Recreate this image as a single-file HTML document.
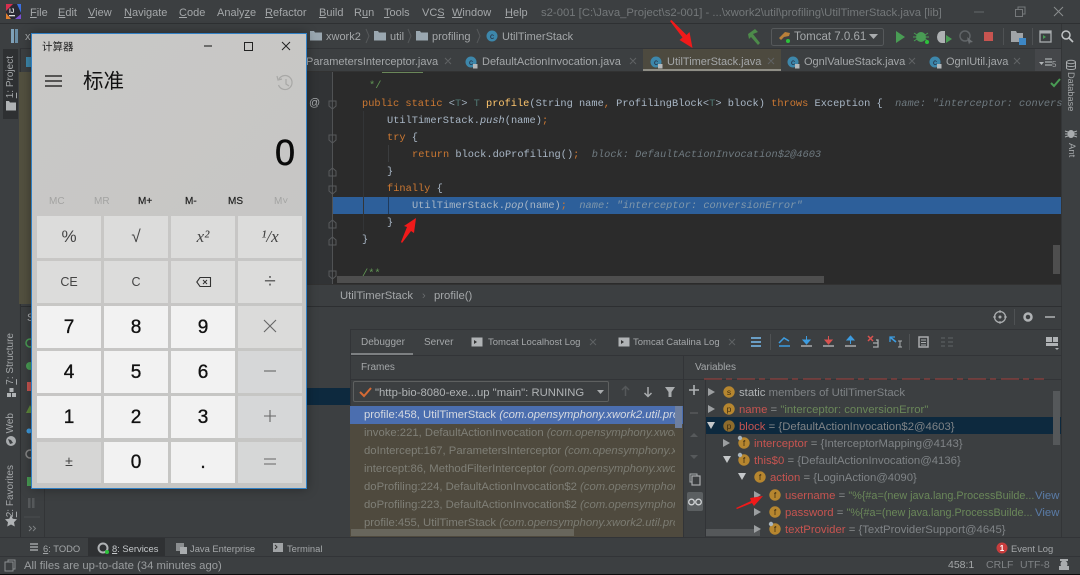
<!DOCTYPE html>
<html><head><meta charset="utf-8"><style>
html,body{margin:0;padding:0;width:1080px;height:575px;overflow:hidden;background:#3c3f41}
#r{position:absolute;left:0;top:0;width:1080px;height:575px;overflow:hidden;font-family:"Liberation Sans","Noto Sans CJK SC",sans-serif;font-size:11px;color:#a4a7a9;filter:blur(.3px)}
.b{position:absolute}
.t{position:absolute;white-space:nowrap;line-height:14px;margin-top:1px}
.c{position:absolute;white-space:pre;line-height:14px;margin-top:1px;font-family:"Liberation Mono",monospace;font-size:10.33px;color:#a9b7c6}
.k{color:#cc7832}.m{color:#ffc66d}.h{color:#6f7a80;font-style:italic}.i{font-style:italic}
.v{position:absolute;white-space:nowrap;line-height:12px;writing-mode:vertical-rl;transform:rotate(180deg);font-size:10.5px;color:#a4a7a9}
.vd{position:absolute;white-space:nowrap;line-height:12px;writing-mode:vertical-rl;font-size:10.5px;color:#a4a7a9}
.f{color:#7f7f77;font-size:11.3px}.f i{color:#7b7b72}
.vr{font-size:11.35px}
.red{color:#c75450}.eq{color:#8b8e90}.g{color:#6a8759}.bl{color:#5a7ca8}.gr{color:#7f8386}
.btn{position:absolute;width:64px;height:42px;text-align:center;line-height:42px;color:#222;font-family:"Liberation Sans","Noto Sans CJK SC",sans-serif}
.n{background:#f2f2f2;font-size:19px;line-height:44px;-webkit-text-stroke:.35px #111;color:#111}
.o{background:#dcdcdb;font-size:16px;color:#444}
.s{font-size:9.4px}
</style></head><body><div id="r">

<!-- structure -->
<div class="b" style="left:0;top:23px;width:1080px;height:1px;background:#2e3032"></div>
<div class="b" style="left:20px;top:48px;width:1042px;height:1px;background:#323437"></div>
<div class="b" style="left:3px;top:49px;width:15px;height:70px;background:#2e3032"></div>
<div class="b" style="left:20px;top:49px;width:1px;height:488px;background:#2f3133"></div>
<div class="b" style="left:19px;top:72px;width:14px;height:232px;background:#52503f"></div>
<!-- editor -->
<div class="b" style="left:307px;top:72px;width:26px;height:212px;background:#313335"></div>
<div class="b" style="left:333px;top:72px;width:729px;height:212px;background:#2b2b2b"></div>
<div class="b" style="left:332px;top:72px;width:1px;height:212px;background:#505254"></div>
<div class="b" style="left:333px;top:197px;width:728px;height:17px;background:#2d5f9a"></div>
<div class="b" style="left:363px;top:197px;width:1px;height:17px;background:#27466b"></div>
<div class="b" style="left:388px;top:197px;width:1px;height:17px;background:#1f3a5c"></div>
<div class="b" style="left:388px;top:145px;width:1px;height:17px;background:#3b3d3f"></div>
<div class="b" style="left:363px;top:111px;width:1px;height:120px;background:#333537"></div>
<div class="b" style="left:382px;top:72px;width:41px;height:1px;background:#6a8759"></div>
<div class="b" style="left:337px;top:276px;width:487px;height:7px;background:#4e4e4e"></div>
<div class="b" style="left:1053px;top:245px;width:7px;height:29px;background:#4e4e4e"></div>
<div class="b" style="left:307px;top:284px;width:755px;height:22px;background:#3c3f41;border-top:1px solid #323232;box-sizing:border-box"></div>
<!-- tabs -->
<div class="b" style="left:643px;top:49px;width:138px;height:23px;background:#4d4a3f"></div>
<div class="b" style="left:643px;top:69px;width:138px;height:3px;background:#8f8e86"></div>
<div class="b" style="left:1035px;top:49px;width:27px;height:23px;background:#45474a"></div>
<div class="b" style="left:307px;top:71px;width:755px;height:1px;background:#323232"></div>
<!-- right strip -->
<div class="b" style="left:1061px;top:24px;width:1px;height:513px;background:#333537"></div>
<!-- debug -->
<div class="b" style="left:21px;top:306px;width:1041px;height:1px;background:#2d2f31"></div>
<div class="b" style="left:350px;top:329px;width:712px;height:1px;background:#323437"></div>
<div class="b" style="left:350px;top:355px;width:712px;height:1px;background:#323437"></div>
<div class="b" style="left:350px;top:353px;width:63px;height:2px;background:#7d8082"></div>
<div class="b" style="left:350px;top:330px;width:1px;height:207px;background:#323437"></div>
<div class="b" style="left:683px;top:355px;width:1px;height:182px;background:#323437"></div>
<div class="b" style="left:350px;top:379px;width:712px;height:1px;background:#323437"></div>
<div class="b" style="left:44px;top:330px;width:1px;height:207px;background:#333537"></div>
<div class="b" style="left:307px;top:388px;width:43px;height:17px;background:#0d293e"></div>
<div class="b" style="left:353px;top:381px;width:256px;height:21px;border:1px solid #5e6060;border-radius:2px;box-sizing:border-box"></div>
<!-- frames -->
<div class="b" style="left:350px;top:406px;width:333px;height:131px;background:#4f4a3e"></div>
<div class="b" style="left:350px;top:406px;width:333px;height:18px;background:#4b6eaf"></div>
<div class="b" style="left:675px;top:406px;width:7px;height:22px;background:#6d7fa0"></div>
<div class="b" style="left:351px;top:529px;width:223px;height:7px;background:#68665c"></div>
<div class="b" style="left:687px;top:492px;width:16px;height:19px;background:#5b5f61;border-radius:2px"></div>
<!-- vars -->
<div class="b" style="left:705px;top:380px;width:1px;height:157px;background:#323437"></div>
<div class="b" style="left:706px;top:417px;width:355px;height:17px;background:#0d293e"></div>
<div class="b" style="left:1053px;top:391px;width:7px;height:54px;background:#55585a"></div>
<div class="b" style="left:706px;top:529px;width:54px;height:7px;background:#55585a"></div>
<div class="b" style="left:0;top:537px;width:1080px;height:1px;background:#323437"></div>
<div class="b" style="left:88px;top:538px;width:77px;height:18px;background:#2f3133"></div>
<div class="b" style="left:0;top:556px;width:1080px;height:1px;background:#323437"></div>
<div class="b" style="left:0;top:574px;width:1080px;height:1px;background:#0c0c0c"></div>

<!-- icons -->
<svg class="b" style="left:0;top:0" width="1080" height="575" viewBox="0 0 1080 575" font-family="Liberation Sans, sans-serif">
<defs>
<g id="ci"><circle cx="0" cy="0" r="5.5" fill="#3d87ab"/><text x="0" y="3" font-size="8" text-anchor="middle" fill="#223">c</text><rect x="2" y="2" width="4.5" height="4.5" fill="#b4b7b9"/></g>
<g id="fo"><path d="M0 0h4l1 1.5h7v8h-12z" fill="#9aa7b0"/></g>
<g id="fi"><circle cx="0" cy="0" r="5.7" fill="#b6862f"/><text x="0" y="3" font-size="8.5" text-anchor="middle" fill="#3c2c10">f</text></g>
<g id="ar"><path d="M-3-4L4 0L-3 4z" fill="#9c9fa1"/></g>
<g id="ad"><path d="M-4-3L4-3L0 4z" fill="#c5c8ca"/></g>
<g id="pin"><circle cx="-4" cy="-5" r="2.2" fill="#a8b4bc"/></g>
<g id="tm"><rect x="-5.5" y="-4.5" width="11" height="9" fill="#b0b3b5"/><path d="M-3-2L0 0L-3 2z" fill="#333"/></g>
</defs>
<!-- logo -->
<rect x="6" y="4" width="15" height="15" fill="#2a2a33"/><path d="M6 4h7l-7 7z" fill="#d6304f"/><path d="M21 4v9l-4-9z" fill="#3c6fe0"/><path d="M6 19v-6l5 6z" fill="#e2802f"/><path d="M21 19h-6l6-5z" fill="#7a4fd0"/><rect x="9" y="15" width="6" height="1.3" fill="#ddd"/><text x="9" y="13" font-size="6.5" font-weight="bold" fill="#ddd">IJ</text>
<!-- nav -->
<rect x="11" y="29" width="3" height="14" fill="#7fa1b8"/><rect x="15" y="29" width="3" height="14" fill="#6a8da5"/>
<use href="#fo" x="310" y="31"/><use href="#fo" x="374" y="31"/><use href="#fo" x="416" y="31"/>
<path d="M366 29l3 7-3 7M408 29l3 7-3 7M477 29l3 7-3 7" fill="none" stroke="#55585a"/>
<circle cx="492" cy="36" r="5.5" fill="#3d87ab"/><text x="492" y="39" font-size="8" text-anchor="middle" fill="#223">c</text>
<!-- toolbar -->
<path d="M748 34l7-5 3 3-5 2 7 9-2 2-7-8-2 2z" fill="#4d8a4a"/>
<rect x="771.5" y="28.5" width="112" height="17" rx="2" fill="none" stroke="#56595b"/>
<path d="M779 38l6-6 5 1-1 3-5 1-3 3z" fill="#b9803a"/><circle cx="788" cy="41" r="2" fill="#2cc23b"/>
<path d="M869 34h9l-4.500 5z" fill="#a9acae"/>
<path d="M896 31l9 6-9 6z" fill="#499c54"/>
<circle cx="921" cy="37" r="5" fill="#499c54"/><path d="M914 33l3 2M928 33l-3 2M914 41l3-2M928 41l-3-2M913 37h3M926 37h3" stroke="#499c54"/><circle cx="927" cy="42" r="2" fill="#2cc23b"/>
<path d="M945 31h-3a5 6 0 0 0 0 12h3z" fill="#aeb1b3"/><path d="M946 35l6 4-6 4z" fill="#499c54"/>
<circle cx="965" cy="36" r="5" fill="none" stroke="#5f6366" stroke-width="1.500"/><path d="M967 37l6 5-3 .5-1 2z" fill="#6a6e71"/>
<rect x="984" y="32" width="9" height="9" fill="#c75450"/>
<rect x="1003" y="28" width="1" height="17" fill="#4f5254"/><rect x="1032" y="28" width="1" height="17" fill="#4f5254"/>
<path d="M1011 31h5l1 2h6v9h-12z" fill="#a0a4a7"/><rect x="1019" y="38" width="7" height="7" fill="#3d87c5"/>
<rect x="1040" y="31" width="11" height="11" fill="none" stroke="#a9acae" stroke-width="1.300"/><rect x="1040" y="31" width="11" height="2.500" fill="#a9acae"/><path d="M1043 35l3 2-3 2z" fill="#499c54"/>
<circle cx="1066" cy="35" r="4" fill="none" stroke="#c0c3c5" stroke-width="1.500"/><path d="M1069 38l4 4" stroke="#c0c3c5" stroke-width="1.700"/>
<!-- window -->
<path d="M974 12h10" stroke="#65686a"/><rect x="1015.500" y="9.500" width="7" height="7" fill="none" stroke="#75787a"/><path d="M1018 9v-2h7v7h-2" fill="none" stroke="#75787a"/><path d="M1054 7l9 9M1063 7l-9 9" stroke="#8a8d8f"/>
<!-- tabs -->
<use href="#ci" x="471" y="62"/><use href="#ci" x="656" y="62"/><use href="#ci" x="793" y="62"/><use href="#ci" x="935" y="62"/>
<path d="M445 58l6 6M451 58l-6 6M630 58l6 6M636 58l-6 6M768 58l6 6M774 58l-6 6M909 58l6 6M915 58l-6 6M1014 58l6 6M1020 58l-6 6" stroke="#606365"/>
<path d="M1039 62h5l-2.500 3z" fill="#b0b3b5"/><path d="M1045 59h7M1045 62h7M1045 65h7" stroke="#9a9d9f" stroke-width="1.500"/>
<path d="M1051 83l3 3 6-7" fill="none" stroke="#499c54" stroke-width="2"/>
<!-- right strip icons -->
<ellipse cx="1071" cy="62" rx="4.500" ry="1.700" fill="none" stroke="#a9acae"/><path d="M1066.500 62v6c0 2 9 2 9 0v-6M1066.500 65c0 2 9 2 9 0" fill="none" stroke="#a9acae"/>
<ellipse cx="1071" cy="134" rx="3.500" ry="4" fill="#a9acae"/><path d="M1065 131l3 1M1077 131l-3 1M1065 134h3M1077 134h-3M1065 137l3-1M1077 137l-3-1" stroke="#a9acae"/>
<!-- gutter -->
<text x="309" y="106" font-size="11" fill="#a9acae">@</text>
<g fill="none" stroke="#57595b">
<path d="M329 101h7v5l-3.500 3-3.500-3zM329 135h7v5l-3.500 3-3.500-3zM329 186h7v5l-3.500 3-3.500-3zM329 271h7v5l-3.500 3-3.500-3z"/>
<path d="M329 176v-5l3.500-3 3.500 3v5zM329 228v-5l3.500-3 3.500 3v5zM329 245v-5l3.500-3 3.500 3v5z"/>
</g>
<!-- debug toolbar -->
<circle cx="1000" cy="317" r="5.500" fill="none" stroke="#a9acae" stroke-width="1.300"/><circle cx="1000" cy="317" r="1.500" fill="#a9acae"/>
<path d="M1000 310v3M1000 321v3M993 317h3M1004 317h3" stroke="#a9acae"/>
<rect x="1014" y="309" width="1" height="16" fill="#4f5254"/>
<circle cx="1028" cy="317" r="3.500" fill="none" stroke="#b0b3b5" stroke-width="2.500"/>
<path d="M1045 317h10" stroke="#b0b3b5" stroke-width="1.500"/>
<path d="M751 338h10M751 342h10M751 346h10" stroke="#6a9ec5" stroke-width="2"/>
<rect x="770" y="334" width="1" height="16" fill="#4f5254"/>
<path d="M779 346h11" stroke="#3d9ce0" stroke-width="1.500"/><path d="M779 343l5-5 5 3" fill="none" stroke="#3d9ce0" stroke-width="1.500"/>
<path d="M801 346h11" stroke="#a9acae" stroke-width="1.500"/><path d="M806.500 336v5M803 340h7l-3.500 4z" stroke="#3d9ce0" fill="#3d9ce0"/>
<path d="M823 346h11" stroke="#a9acae" stroke-width="1.500"/><path d="M828.500 336v5M825 340h7l-3.500 4z" stroke="#d9524f" fill="#d9524f"/>
<path d="M845 346h11" stroke="#a9acae" stroke-width="1.500"/><path d="M850.500 344v-5M847 340h7l-3.500-4z" stroke="#3d9ce0" fill="#3d9ce0"/>
<path d="M868 336l5 5M873 336l-5 5" stroke="#d9524f" stroke-width="1.500"/><path d="M873 343h5v4h-5M876 340h2v3" fill="none" stroke="#a9acae" stroke-width="1.300"/>
<path d="M890 337l6 5" stroke="#3d9ce0" stroke-width="1.700"/><path d="M890 342v-5h5" fill="none" stroke="#3d9ce0" stroke-width="1.300"/><path d="M898 341h4M900 341v6M898 347h4" stroke="#a9acae"/>
<rect x="909" y="334" width="1" height="16" fill="#4f5254"/>
<rect x="919" y="337" width="9" height="10" fill="none" stroke="#a9acae" stroke-width="1.500"/><path d="M921 340h5M921 342.500h5M921 345h5" stroke="#a9acae"/>
<path d="M941 338h4M941 342h4M941 346h4M948 338h5M948 342h5M948 346h5" stroke="#5a5d5f" stroke-width="1.300"/>
<rect x="1046" y="337" width="6" height="5" fill="#b0b3b5"/><rect x="1053" y="337" width="5" height="5" fill="#b0b3b5"/><rect x="1046" y="343" width="12" height="3" fill="#b0b3b5"/><path d="M1055 348h4l-2 2z" fill="#b0b3b5"/>
<!-- tomcat tab icons -->
<use href="#tm" x="477" y="342"/><use href="#tm" x="624" y="342"/>
<path d="M590 339l6 6M596 339l-6 6M729 339l6 6M735 339l-6 6" stroke="#5f6264"/>
<!-- combo -->
<path d="M360 392l4 4 7-8" fill="none" stroke="#d56a35" stroke-width="2"/>
<path d="M597 390h7l-3.500 4z" fill="#a9acae"/>
<path d="M625.500 396v-9M622 390l3.500-3.500 3.500 3.500" fill="none" stroke="#55585a" stroke-width="1.500"/>
<path d="M648 387v9M644.500 393l3.500 3.500 3.500-3.500" fill="none" stroke="#a9acae" stroke-width="1.500"/>
<path d="M665 387h10l-3.500 5v5h-3v-5z" fill="#a9acae"/>
<!-- var col icons -->
<path d="M689 390h10M694 385v10" stroke="#b0b3b5" stroke-width="1.600"/>
<path d="M690 413h8" stroke="#56595b" stroke-width="1.500"/>
<path d="M690 437l4-4 4 4z" fill="#56595b"/><path d="M690 455l4 4 4-4z" fill="#56595b"/>
<rect x="690" y="474" width="7" height="8" fill="none" stroke="#a9acae"/><rect x="692" y="476" width="8" height="9" fill="#3c3f41" stroke="#a9acae" stroke-width="1.200"/>
<circle cx="691.500" cy="502" r="2.800" fill="none" stroke="#d0d3d5" stroke-width="1.300"/><circle cx="698.500" cy="502" r="2.800" fill="none" stroke="#d0d3d5" stroke-width="1.300"/>
<!-- vars tree -->
<path d="M704 379h340" stroke="#a5413d" stroke-dasharray="18 4 6 5" stroke-width="1"/>
<use href="#ar" x="711" y="392"/><use href="#ar" x="711" y="409"/><use href="#ad" x="711" y="425"/>
<use href="#ar" x="726" y="443"/><use href="#ad" x="727" y="459"/><use href="#ad" x="742" y="476"/>
<use href="#ar" x="757" y="495"/><use href="#ar" x="757" y="512"/><use href="#ar" x="757" y="529"/>
<circle cx="729" cy="392" r="5.700" fill="#b6862f"/><text x="729" y="395" font-size="8.500" text-anchor="middle" fill="#3c2c10">s</text>
<circle cx="729" cy="409" r="5.700" fill="#b6862f"/><text x="729" y="412" font-size="8.500" text-anchor="middle" fill="#3c2c10">p</text>
<circle cx="729" cy="426" r="5.700" fill="#8d6b2c"/><text x="729" y="429" font-size="8.500" text-anchor="middle" fill="#3c2c10">p</text>
<use href="#fi" x="744" y="443"/><use href="#pin" x="744" y="443"/>
<use href="#fi" x="744" y="460"/><use href="#pin" x="744" y="460"/>
<use href="#fi" x="760" y="477"/>
<use href="#fi" x="775" y="495"/><use href="#fi" x="775" y="512"/><use href="#fi" x="775" y="529"/><use href="#pin" x="775" y="529"/>
<!-- left strip icons -->
<path d="M6 101h3l1 1.500h6v8h-10z" fill="#b0b3b5"/>
<rect x="7" y="393" width="4" height="4" fill="#b0b3b5"/><rect x="12" y="393" width="4" height="4" fill="#b0b3b5"/><rect x="9.500" y="388" width="4" height="4" fill="#b0b3b5"/>
<circle cx="11" cy="441" r="5" fill="#a9acae"/><path d="M8 439l3 1 2 3-3 1z" fill="#3c3f41"/>
<path d="M11 515l1.800 3.800 4.200.5-3 3 .8 4.200-3.800-2-3.800 2 .8-4.200-3-3 4.200-.5z" fill="#b0b3b5"/>
<!-- narrow col -->
<rect x="26" y="57" width="6" height="10" fill="#3d87ab"/>
<circle cx="30" cy="343" r="4" fill="none" stroke="#499c54" stroke-width="1.500"/>
<circle cx="30" cy="366" r="4" fill="#499c54"/>
<rect x="27" y="382" width="5" height="9" fill="#c75450"/>
<path d="M30 405l-4 8h8z" fill="#5f8a3b"/>
<circle cx="29" cy="431" r="2.500" fill="#3d9ce0"/>
<circle cx="30" cy="454" r="4" fill="none" stroke="#888" stroke-width="1.500"/>
<rect x="27" y="477" width="4" height="9" fill="#499c54"/>
<rect x="28" y="498" width="2.500" height="10" fill="#55585a"/><rect x="32" y="498" width="2.500" height="10" fill="#55585a"/>
<path d="M24 517h16" stroke="#4a4d4f"/>
<path d="M29 526l2.500 2.500-2.500 2.500M33 526l2.500 2.500-2.500 2.500" fill="none" stroke="#7d8082"/>
<!-- bottom icons -->
<path d="M30 544h8M30 547h8M30 550h8" stroke="#a0a3a5" stroke-width="1.500"/>
<circle cx="103" cy="548" r="4.500" fill="none" stroke="#b0b3b5" stroke-width="2"/><circle cx="107" cy="552" r="2" fill="#2cc23b"/>
<rect x="176" y="543" width="8" height="8" fill="#8b8e90"/><rect x="180" y="547" width="7" height="7" fill="#a9acae"/>
<rect x="273" y="543" width="10" height="9" fill="#a0a3a5"/><path d="M275 545l2 2-2 2" fill="none" stroke="#333"/>
<rect x="8" y="560" width="7" height="9" fill="none" stroke="#8a8d8f"/><rect x="5" y="562" width="8" height="9" fill="#3c3f41" stroke="#8a8d8f"/>
<circle cx="1002" cy="548" r="5.500" fill="#c73d3d"/><text x="1002" y="551" font-size="8" font-weight="bold" text-anchor="middle" fill="#fff">1</text>
<circle cx="1064" cy="564" r="3.500" fill="#a9acae"/><rect x="1059" y="566" width="10" height="4" fill="#a9acae"/><rect x="1060" y="559" width="8" height="2" fill="#a9acae"/>
</svg>

<!-- menu -->
<span class="t" style="left:30px;top:5px"><u>F</u>ile</span><span class="t" style="left:58px;top:5px"><u>E</u>dit</span><span class="t" style="left:88px;top:5px"><u>V</u>iew</span><span class="t" style="left:124px;top:5px"><u>N</u>avigate</span><span class="t" style="left:179px;top:5px"><u>C</u>ode</span><span class="t" style="left:217px;top:5px">Analy<u>z</u>e</span><span class="t" style="left:265px;top:5px"><u>R</u>efactor</span><span class="t" style="left:319px;top:5px"><u>B</u>uild</span><span class="t" style="left:354px;top:5px">R<u>u</u>n</span><span class="t" style="left:384px;top:5px"><u>T</u>ools</span><span class="t" style="left:422px;top:5px">VC<u>S</u></span><span class="t" style="left:452px;top:5px"><u>W</u>indow</span><span class="t" style="left:505px;top:5px"><u>H</u>elp</span>
<span class="t" style="left:541px;top:5px;color:#74787a;font-size:11.3px">s2-001 [C:\Java_Project\s2-001] - ...\xwork2\util\profiling\UtilTimerStack.java [lib]</span>
<!-- nav -->
<span class="t" style="left:25px;top:29px">x</span><span class="t" style="left:326px;top:29px">xwork2</span><span class="t" style="left:390px;top:29px">util</span><span class="t" style="left:432px;top:29px">profiling</span><span class="t" style="left:502px;top:29px">UtilTimerStack</span>
<span class="t" style="left:794px;top:29px;font-size:11.500px">Tomcat 7.0.61</span>
<!-- tabs -->
<span class="t" style="left:306px;top:54px">ParametersInterceptor.java</span><span class="t" style="left:482px;top:54px">DefaultActionInvocation.java</span><span class="t" style="left:667px;top:54px">UtilTimerStack.java</span><span class="t" style="left:804px;top:54px">OgnlValueStack.java</span><span class="t" style="left:946px;top:54px">OgnlUtil.java</span>
<span class="t" style="left:1052px;top:57px;font-size:8px">5</span>
<!-- code -->
<div class="c" style="left:369px;top:78px;color:#629755">*/</div>
<div class="c" style="left:362px;top:96px"><span class="k">public static</span> &lt;<span style="color:#507874">T</span>&gt; <span style="color:#507874">T</span> <span class="m">profile</span>(String name<span class="k">,</span> ProfilingBlock&lt;<span style="color:#507874">T</span>&gt; block) <span class="k">throws</span> Exception {  <span class="h">name: "interceptor: convers</span></div>
<div class="c" style="left:387px;top:113px">UtilTimerStack.<span class="i">push</span>(name)<span class="k">;</span></div>
<div class="c" style="left:387px;top:130px"><span class="k">try</span> {</div>
<div class="c" style="left:412px;top:147px"><span class="k">return</span> block.doProfiling()<span class="k">;</span>  <span class="h">block: DefaultActionInvocation$2@4603</span></div>
<div class="c" style="left:387px;top:164px">}</div>
<div class="c" style="left:387px;top:181px"><span class="k">finally</span> {</div>
<div class="c" style="left:412px;top:198px">UtilTimerStack.<span class="i">pop</span>(name)<span class="k">;</span>  <span class="h" style="color:#8198ab">name: "interceptor: conversionError"</span></div>
<div class="c" style="left:387px;top:215px">}</div>
<div class="c" style="left:362px;top:232px">}</div>
<div class="c" style="left:362px;top:266px;color:#629755">/**</div>
<!-- breadcrumb -->
<span class="t" style="left:340px;top:288px;font-size:11.3px">UtilTimerStack</span><span class="t" style="left:422px;top:288px;color:#6a6d6f">›</span><span class="t" style="left:434px;top:288px;font-size:11.3px">profile()</span>
<!-- debugger tabs -->
<span class="t" style="left:361px;top:335px;font-size:10px">Debugger</span><span class="t" style="left:424px;top:335px;font-size:10px">Server</span><span class="t" style="left:488px;top:335px;font-size:9.5px">Tomcat Localhost Log</span><span class="t" style="left:633px;top:335px;font-size:9.5px">Tomcat Catalina Log</span>
<span class="t" style="left:361px;top:360px;font-size:10px">Frames</span><span class="t" style="left:695px;top:360px;font-size:10px">Variables</span>
<span class="t" style="left:375px;top:385px;font-size:11.300px;color:#b0b3b5">"http-bio-8080-exe...up "main": RUNNING</span>
<!-- frames list -->
<div class="b" style="left:350px;top:406px;width:325px;height:131px;overflow:hidden">
<span class="t" style="left:14px;top:1px;color:#d5d9e0;font-size:11.3px">profile:458, UtilTimerStack <i>(com.opensymphony.xwork2.util.profiling)</i></span>
<span class="t f" style="left:14px;top:19px">invoke:221, DefaultActionInvocation <i>(com.opensymphony.xwork2)</i></span>
<span class="t f" style="left:14px;top:37px">doIntercept:167, ParametersInterceptor <i>(com.opensymphony.xwork2)</i></span>
<span class="t f" style="left:14px;top:55px">intercept:86, MethodFilterInterceptor <i>(com.opensymphony.xwork2)</i></span>
<span class="t f" style="left:14px;top:73px">doProfiling:224, DefaultActionInvocation$2 <i>(com.opensymphony.xwork2)</i></span>
<span class="t f" style="left:14px;top:91px">doProfiling:223, DefaultActionInvocation$2 <i>(com.opensymphony.xwork2)</i></span>
<span class="t f" style="left:14px;top:109px">profile:455, UtilTimerStack <i>(com.opensymphony.xwork2.util.profiling)</i></span>
</div>
<!-- variables -->
<span class="t vr" style="left:739px;top:385px"><span style="color:#b0b3b5">static</span> <span class="gr">members of UtilTimerStack</span></span>
<span class="t vr" style="left:739px;top:402px"><span class="red">name</span> <span class="eq">=</span> <span class="g">"interceptor: conversionError"</span></span>
<span class="t vr" style="left:739px;top:419px"><span class="red">block</span> <span class="eq">=</span> <span class="gr">{DefaultActionInvocation$2@4603}</span></span>
<span class="t vr" style="left:754px;top:436px"><span class="red">interceptor</span> <span class="eq">=</span> <span class="gr">{InterceptorMapping@4143}</span></span>
<span class="t vr" style="left:754px;top:453px"><span class="red">this$0</span> <span class="eq">=</span> <span class="gr">{DefaultActionInvocation@4136}</span></span>
<span class="t vr" style="left:770px;top:470px"><span class="red">action</span> <span class="eq">=</span> <span class="gr">{LoginAction@4090}</span></span>
<span class="t vr" style="left:785px;top:488px"><span class="red">username</span> <span class="eq">=</span> <span class="g" style="font-size:10.8px">"%{#a=(new java.lang.ProcessBuilde...</span></span><span class="t bl vr" style="left:1035px;top:488px">View</span>
<span class="t vr" style="left:785px;top:505px"><span class="red">password</span> <span class="eq">=</span> <span class="g" style="font-size:10.8px">"%{#a=(new java.lang.ProcessBuilde...</span></span><span class="t bl vr" style="left:1035px;top:505px">View</span>
<span class="t vr" style="left:785px;top:522px"><span class="red">textProvider</span> <span class="eq">=</span> <span class="gr">{TextProviderSupport@4645}</span></span>
<!-- bottom -->
<span class="t s" style="left:43px;top:541px"><u>6</u>: TODO</span><span class="t s" style="left:112px;top:541px;color:#c5c8ca"><u>8</u>: Services</span><span class="t s" style="left:190px;top:541px">Java Enterprise</span><span class="t s" style="left:287px;top:541px">Terminal</span>
<span class="t s" style="left:1011px;top:541px">Event Log</span>
<span class="t" style="left:24px;top:558px;font-size:11.3px;color:#9a9d9f">All files are up-to-date (34 minutes ago)</span>
<span class="t" style="left:948px;top:557px;font-size:10.500px">458:1</span><span class="t" style="left:986px;top:557px;font-size:10.500px;color:#7f8285">CRLF</span><span class="t" style="left:1020px;top:557px;font-size:10.500px;color:#7f8285">UTF-8</span>
<!-- vertical labels -->
<span class="v" style="left:5px;top:56px;font-size:10px"><u>1</u>: Project</span>
<span class="v" style="left:5px;top:333px;font-size:10px"><u>7</u>: Structure</span>
<span class="v" style="left:5px;top:413px;font-size:10px">Web</span>
<span class="v" style="left:5px;top:465px;font-size:10px"><u>2</u>: Favorites</span>
<span class="vd" style="left:1065px;top:72px;font-size:9.2px">Database</span>
<span class="vd" style="left:1065px;top:143px;font-size:9.5px">Ant</span>
<span class="t" style="left:27px;top:310px;color:#a9acae">S</span>

<!-- calculator -->
<div class="b" style="left:31px;top:33px;width:276px;height:456px;box-sizing:border-box;border:1px solid #2f7fc4;background:linear-gradient(135deg,#c9c8c6,#c5c5c4);box-shadow:0 0 10px rgba(0,0,0,.35)"></div>
<span class="t" style="left:42px;top:39px;font-size:10.500px;color:#222">计算器</span>
<svg class="b" style="left:31px;top:33px" width="276" height="170" viewBox="31 33 276 170">
<path d="M204 46h8" stroke="#222" stroke-width="1.100"/>
<rect x="244.500" y="42.500" width="8" height="8" fill="none" stroke="#222" stroke-width="1"/>
<path d="M282 42l8 8M290 42l-8 8" stroke="#222" stroke-width="1"/>
<path d="M45 76h17M45 81h17M45 86h17" stroke="#111" stroke-width="1.200"/>
<path d="M279 79a7 7 0 1 1-.500 6" fill="none" stroke="#a8a8a6" stroke-width="1.200"/><path d="M277 76l1 4 4-1" fill="none" stroke="#a8a8a6" stroke-width="1.200"/><path d="M286 79v5l3 2" fill="none" stroke="#a8a8a6" stroke-width="1.200"/>
</svg>
<span class="t" style="left:83px;top:70px;font-size:20.500px;line-height:22px;color:#111">标准</span>
<span class="t" style="left:275px;top:130px;font-size:36px;line-height:44px;color:#0a0a0a;-webkit-text-stroke:.5px #0a0a0a">0</span>
<span class="t" style="left:49px;top:194px;font-size:10px;color:#a3a3a2">MC</span><span class="t" style="left:94px;top:194px;font-size:10px;color:#a3a3a2">MR</span><span class="t" style="left:138px;top:194px;font-size:10px;color:#222;-webkit-text-stroke:.2px #222">M+</span><span class="t" style="left:185px;top:194px;font-size:10px;color:#222;-webkit-text-stroke:.2px #222">M-</span><span class="t" style="left:228px;top:194px;font-size:10px;color:#222;-webkit-text-stroke:.2px #222">MS</span><span class="t" style="left:274px;top:194px;font-size:10px;color:#a3a3a2">M˅</span>

<div class="btn o" style="left:37px;top:216px;font-size:17px">%</div><div class="btn o" style="left:104px;top:216px;font-size:17px">√</div><div class="btn o" style="left:171px;top:216px;font-family:'Liberation Serif',serif;font-style:italic;font-size:17px">x²</div><div class="btn o" style="left:238px;top:216px;font-family:'Liberation Serif',serif;font-style:italic;font-size:17px">¹/x</div>
<div class="btn o" style="left:37px;top:261px;font-size:12.500px">CE</div><div class="btn o" style="left:104px;top:261px;font-size:12.500px">C</div><div class="btn o" style="left:171px;top:261px"></div><div class="btn o" style="left:238px;top:261px;font-size:21px;font-weight:normal;color:#666">÷</div>
<svg class="b" style="left:196px;top:276px" width="16" height="12" viewBox="0 0 16 12"><path d="M4 1.500h10.500v9H4L.8 6z" fill="none" stroke="#333" stroke-width="1.100"/><path d="M7 4l4 4M11 4l-4 4" stroke="#333"/></svg>
<div class="btn n" style="left:37px;top:306px">7</div><div class="btn n" style="left:104px;top:306px">8</div><div class="btn n" style="left:171px;top:306px">9</div><div class="btn o" style="left:238px;top:306px;background:#dbdbda"></div>
<div class="btn n" style="left:37px;top:351px">4</div><div class="btn n" style="left:104px;top:351px">5</div><div class="btn n" style="left:171px;top:351px">6</div><div class="btn o" style="left:238px;top:351px;background:#d6d7d8"></div>
<div class="btn n" style="left:37px;top:396px">1</div><div class="btn n" style="left:104px;top:396px">2</div><div class="btn n" style="left:171px;top:396px">3</div><div class="btn o" style="left:238px;top:396px;background:#d6d7d8"></div>
<div class="btn o" style="left:37px;top:442px;height:41px;line-height:38px;background:#d6d6d5;font-size:14px">±</div><div class="btn n" style="left:104px;top:442px;height:41px;line-height:42px">0</div><div class="btn n" style="left:171px;top:442px;height:41px;line-height:42px">.</div><div class="btn o" style="left:238px;top:442px;height:41px;background:#d6d7d7"></div>
<svg class="b" style="left:238px;top:306px" width="64" height="177" viewBox="238 306 64 177" stroke="#666" stroke-width="1.100">
<path d="M264 320l12 12M276 320l-12 12"/>
<path d="M264 371h12"/>
<path d="M264 416h12M270 410v12"/>
<path d="M264 459h12M264 464h12"/>
</svg>

<!-- arrows -->
<svg class="b" style="left:0;top:0" width="1080" height="575" viewBox="0 0 1080 575" fill="#f01a1a">
<path d="M670 21l1.500-1 15 15 3-3 3 16-13-8 3-2.500z"/>
<path d="M401 242l6-15-3-1 12-8-2 15-3-2-9 12z"/>
<path d="M736 508l15-7-1-3 13-2-9 10-2-3-15 6z"/>
</svg>
</div></body></html>
